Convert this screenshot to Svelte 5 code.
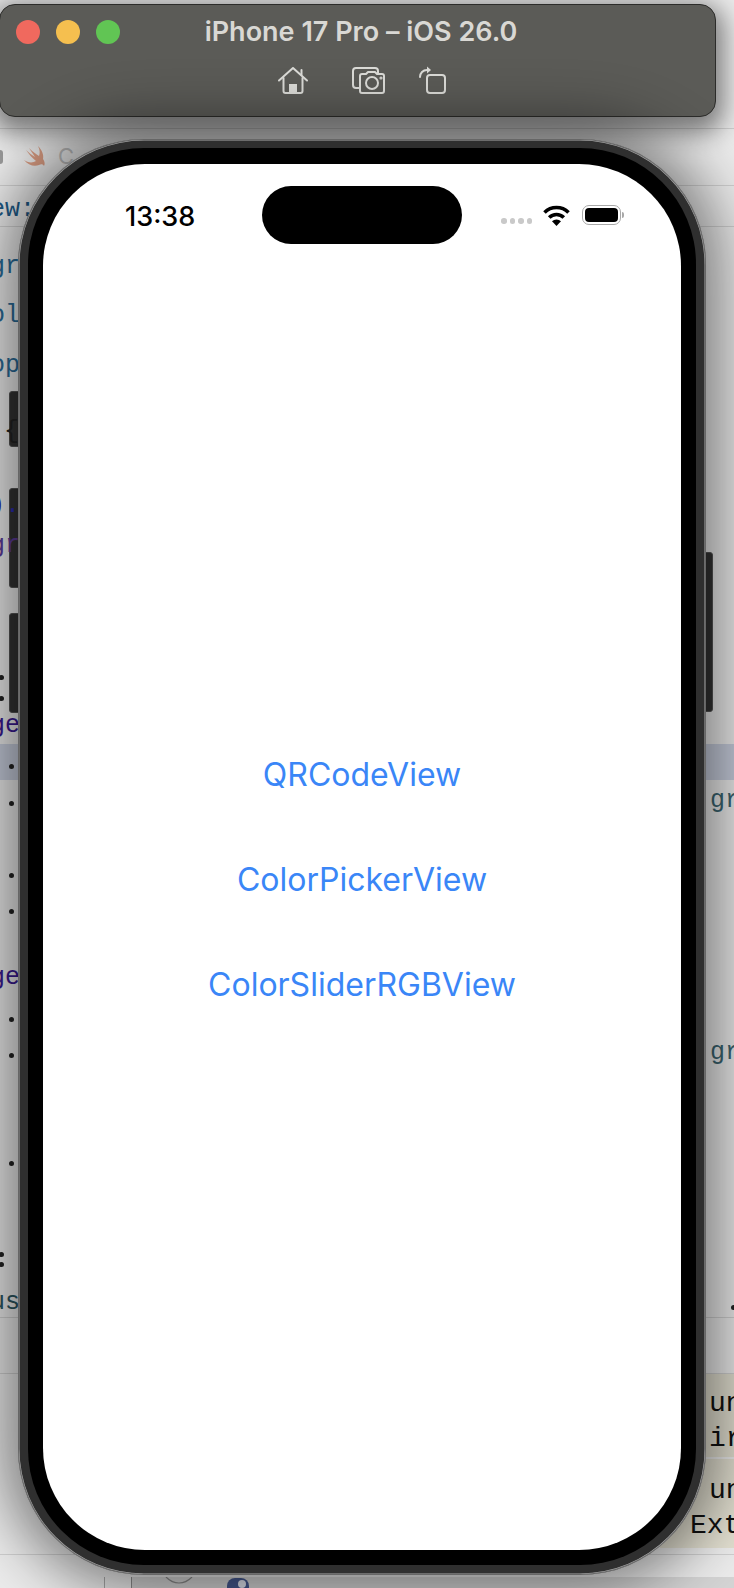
<script>
	const links = ['QRCodeView', 'ColorPickerView', 'ColorSliderRGBView'];

	// bits of the code editor that peek out round the simulator
	const code = [
		{ text: 'View:', x: -40, y: 194, color: '#1d5a86' },
		{ text: 'gr', x: -10, y: 251, color: '#2a6a96' },
		{ text: 'ol', x: -10, y: 300, color: '#2a6a96' },
		{ text: 'op', x: -10, y: 350, color: '#2a6a96' },
		{ text: '{', x: 4, y: 416, color: '#222' },
		{ text: ').', x: -10, y: 490, color: '#2b2bb0' },
		{ text: 'gr', x: -10, y: 530, color: '#5b3a98' },
		{ text: 'ge', x: -10, y: 710, color: '#3a1a90' },
		{ text: 'ge', x: -10, y: 962, color: '#3a1a90' },
		{ text: 'us', x: -10, y: 1287, color: '#2b5560' },
		{ text: 'gr', x: 710, y: 785, color: '#3b6470' },
		{ text: 'gr', x: 710, y: 1037, color: '#3b6470' }
	];
	const notes = [
		{ text: 'un', x: 709, y: 1388 },
		{ text: 'ir', x: 709, y: 1423 },
		{ text: 'un', x: 709, y: 1475 },
		{ text: 'Ext', x: 690, y: 1510 }
	];
	const bullets = [
		[11, 766], [11, 803], [11, 875], [11, 911], [11, 1019], [11, 1055], [11, 1163],
		[1, 677], [1, 698], [1, 1254], [1, 1264], [733, 1307]
	];
	const rules = [128, 185, 226, 1317, 1373, 1554];
</script>

<div class="desktop">
	<div class="highlight"></div>
	<div class="note note-a"></div>
	<div class="note note-b"></div>
	{#each rules as y}
		<div class="rule" style="top: {y}px"></div>
	{/each}

	<span class="side-btn left" style="top: 391px; height: 56px"></span>
	<span class="side-btn left" style="top: 488px; height: 100px"></span>
	<span class="side-btn left" style="top: 613px; height: 100px"></span>
	<span class="side-btn right" style="top: 552px; height: 160px"></span>

	{#each code as c}
		<span class="code" style="left: {c.x}px; top: {c.y}px; color: {c.color}">{c.text}</span>
	{/each}
	{#each notes as n}
		<span class="code note-text" style="left: {n.x}px; top: {n.y}px">{n.text}</span>
	{/each}
	{#each bullets as b}
		<span class="bullet" style="left: {b[0] - 2}px; top: {b[1] - 2}px"></span>
	{/each}

	<span class="chevron"></span>
	<svg class="swift" width="24" height="24" viewBox="0 0 24 24">
		<path d="M15 1c4 4 6 9 5 13 2 3 2 5 1 7-1-2-3-2-5-1-5 2-11 0-15-5 4 3 9 3 12 1C9 13 6 9 3 5c3 3 6 5 9 7C10 9 8 6 6 3c4 4 7 6 10 8 1-3 1-6-1-10z" fill="#d99c82" />
	</svg>
	<span class="file-name">C</span>

	<div class="toolbar">
		<span class="divider"></span>
		<svg class="eye" width="28" height="7" viewBox="0 0 28 7">
			<path d="M1 0c4 4 8 6 13 6s9-2 13-6" fill="none" stroke="#8a8a8a" stroke-width="1.200" />
		</svg>
		<span class="toggle"><span class="knob"></span></span>
	</div>

	<header class="window">
		<div class="title-row">
			<div class="lights">
				<span class="light red"></span>
				<span class="light yellow"></span>
				<span class="light green"></span>
			</div>
			<div class="title">iPhone 17 Pro – iOS 26.0</div>
		</div>
		<div class="actions">
			<svg width="30" height="27" viewBox="0 0 30 27" fill="none" stroke="#dcdcd8" stroke-width="2" stroke-linecap="round" stroke-linejoin="round">
				<path d="M1 13.500 15 1l14 12.500" />
				<path d="M23.500 3v5" />
				<path d="M5.500 11v13a2 2 0 0 0 2 2h15a2 2 0 0 0 2-2V11" />
				<rect x="11" y="17" width="8" height="9" fill="#dcdcd8" stroke="none" />
			</svg>
			<svg width="34" height="27" viewBox="0 0 34 27" fill="none" stroke="#dcdcd8" stroke-width="2" stroke-linecap="round" stroke-linejoin="round">
				<path d="M7 21H4a3 3 0 0 1-3-3V4a3 3 0 0 1 3-3h19a3 3 0 0 1 3 3v2" />
				<path d="M10 7h4l2-2h7l2 2h5a2 2 0 0 1 2 2v15a2 2 0 0 1-2 2H10a2 2 0 0 1-2-2V9a2 2 0 0 1 2-2z" />
				<circle cx="20" cy="16" r="6" />
				<circle cx="29" cy="11" r=".6" />
			</svg>
			<svg class="rotate" width="27" height="29" viewBox="0 0 27 29" fill="none" stroke="#dcdcd8" stroke-width="2" stroke-linecap="round" stroke-linejoin="round">
				<rect x="8" y="10" width="18" height="18" rx="3" />
				<path d="M1 12c0-4 3-7 7-7" />
				<path d="M8 1.500 12 5 8 8.500z" fill="#dcdcd8" stroke="none" />
			</svg>
		</div>
	</header>

	<div class="phone">
		<div class="black">
			<main class="screen">
				<div class="status">
					<span class="time">13:38</span>
					<span class="island"></span>
					<div class="indicators">
						<span class="dots"><i></i><i></i><i></i><i></i></span>
						<svg width="27" height="21" viewBox="0 0 27 21">
							<path d="M1.500 7.500a17 17 0 0 1 24 0" fill="none" stroke="#000" stroke-width="3.600" />
							<path d="M6.200 12.500a10.300 10.300 0 0 1 14.600 0" fill="none" stroke="#000" stroke-width="3.600" />
							<path d="M9 16.300a6.300 6.300 0 0 1 9 0L13.500 21z" fill="#000" />
						</svg>
						<span class="battery"><span class="level"></span></span>
						<span class="nub"></span>
					</div>
				</div>
				<nav class="links">
					{#each links as link}
						<a href="#{link}">{link}</a>
					{/each}
				</nav>
			</main>
		</div>
	</div>
</div>

<style>
	:global(body) {
		margin: 0;
		background: #e6e6e6;
	}

	.desktop {
		position: relative;
		width: 734px;
		height: 1588px;
		overflow: hidden;
		background: #ebebeb;
		font-family: Inter, 'Liberation Sans', sans-serif;
	}

	.highlight {
		position: absolute;
		top: 744px;
		left: 0;
		width: 100%;
		height: 36px;
		background: #c6ccdb;
	}

	.note {
		position: absolute;
		left: 660px;
		width: 74px;
		background: #e2dfd0;
	}
	.note-a {
		top: 1373px;
		height: 84px;
	}
	.note-b {
		top: 1459px;
		height: 89px;
	}

	.rule {
		position: absolute;
		left: 0;
		width: 100%;
		height: 1px;
		background: #cfcfcf;
	}

	.code {
		position: absolute;
		font-family: 'Liberation Mono', monospace;
		font-size: 25px;
		line-height: 32px;
	}
	.note-text {
		font-size: 28px;
		color: #111;
	}

	.bullet {
		position: absolute;
		width: 5px;
		height: 5px;
		border-radius: 50%;
		background: #222;
	}

	.chevron {
		position: absolute;
		left: -5px;
		top: 150px;
		width: 8px;
		height: 14px;
		background: #999;
		border-radius: 3px;
	}

	.swift {
		position: absolute;
		left: 23px;
		top: 145px;
	}

	.file-name {
		position: absolute;
		left: 58px;
		top: 143px;
		font-size: 22px;
		color: #bbb;
	}

	.toolbar {
		position: absolute;
		left: 131px;
		right: 0;
		top: 1577px;
		height: 11px;
		background: #d4d4d4;
		border-left: 1px solid #8c8c8c;
	}
	.divider {
		position: absolute;
		left: -28px;
		top: 0;
		width: 1px;
		height: 11px;
		background: #a8a8a8;
	}
	.eye {
		position: absolute;
		left: 33px;
		top: 0;
	}
	.toggle {
		position: absolute;
		left: 95px;
		top: 1px;
		width: 22px;
		height: 10px;
		border-radius: 8px 8px 0 0;
		background: #46598f;
	}
	.knob {
		position: absolute;
		left: 11px;
		top: 2px;
		width: 8px;
		height: 8px;
		border-radius: 50%;
		background: #dfe3ee;
	}

	/* simulator window */
	.window {
		position: absolute;
		left: -1px;
		top: 4px;
		width: 717px;
		height: 113px;
		box-sizing: border-box;
		display: flex;
		flex-direction: column;
		border: 1px solid #2c2c2a;
		border-radius: 16px;
		background: #5b5b57;
		box-shadow: 0 8px 26px 8px rgba(0, 0, 0, 0.48);
	}

	.title-row {
		position: relative;
		height: 56px;
		display: flex;
		align-items: center;
		justify-content: center;
	}

	.lights {
		position: absolute;
		left: 16px;
		top: 15px;
		display: flex;
		gap: 16px;
	}
	.light {
		width: 24px;
		height: 24px;
		border-radius: 50%;
	}
	.red {
		background: #f0695e;
	}
	.yellow {
		background: #f5bf4f;
	}
	.green {
		background: #61c554;
	}

	.title {
		margin-top: -3px;
		margin-left: 7px;
		color: #d9d8d4;
		font-size: 27px;
		font-weight: 600;
		white-space: nowrap;
	}

	.actions {
		display: flex;
		align-items: flex-end;
		justify-content: center;
		gap: 44px;
		margin-top: 4px;
		padding-left: 9px;
	}
	.rotate {
		margin-left: -11px;
	}

	.side-btn {
		position: absolute;
		background: #333;
		border: 1px solid #555;
		box-sizing: border-box;
	}
	.side-btn.left {
		left: 9px;
		width: 10px;
		border-radius: 3px 0 0 3px;
	}
	.side-btn.right {
		left: 705px;
		width: 8px;
		border-radius: 0 3px 3px 0;
	}

	/* device */
	.phone {
		position: absolute;
		left: 18px;
		top: 139px;
		width: 688px;
		height: 1436px;
		box-sizing: border-box;
		padding: 9px 10px 10px;
		border-radius: 126px;
		background: #2f2f2f;
		box-shadow:
			inset 0 0 0 1px #666,
			inset 0 0 0 1.500px #aaa,
			0 0 58px 16px rgba(0, 0, 0, 0.48);
	}

	.black {
		height: 100%;
		box-sizing: border-box;
		padding: 16px 15px 15px;
		background: #000;
		border-radius: 116px;
	}

	.screen {
		height: 100%;
		display: flex;
		flex-direction: column;
		background: #fff;
		border-radius: 102px;
		overflow: hidden;
	}

	.status {
		position: relative;
		height: 80px;
		padding-top: 21px;
		display: flex;
		align-items: center;
		justify-content: space-between;
	}

	.time {
		margin-left: 82px;
		margin-bottom: 18px;
		font-size: 27px;
		font-weight: 500;
		color: #000;
	}

	.island {
		position: absolute;
		left: 219px;
		top: 22px;
		width: 200px;
		height: 58px;
		border-radius: 29px;
		background: #000;
	}

	.indicators {
		display: flex;
		align-items: center;
		margin-right: 57px;
		margin-bottom: 20px;
	}

	.dots {
		display: flex;
		gap: 3px;
		margin-top: 12px;
		margin-right: 11px;
	}
	.dots i {
		width: 5.500px;
		height: 5.500px;
		border-radius: 50%;
		background: #c9c9c9;
	}

	.battery {
		width: 39px;
		height: 20px;
		margin-left: 12px;
		box-sizing: border-box;
		padding: 2px;
		border: 1.500px solid #a8a8a8;
		border-radius: 7px;
	}
	.level {
		display: block;
		height: 100%;
		border-radius: 4px;
		background: #000;
	}
	.nub {
		width: 2px;
		height: 6px;
		margin-left: 1px;
		border-radius: 0 2px 2px 0;
		background: #a8a8a8;
	}

	.links {
		flex: 1;
		display: flex;
		flex-direction: column;
		align-items: center;
		gap: 66.500px;
		padding-top: 491px;
	}
	.links a {
		color: #3a86f7;
		font-size: 32px;
		line-height: 38.500px;
		text-decoration: none;
		white-space: nowrap;
	}
</style>
